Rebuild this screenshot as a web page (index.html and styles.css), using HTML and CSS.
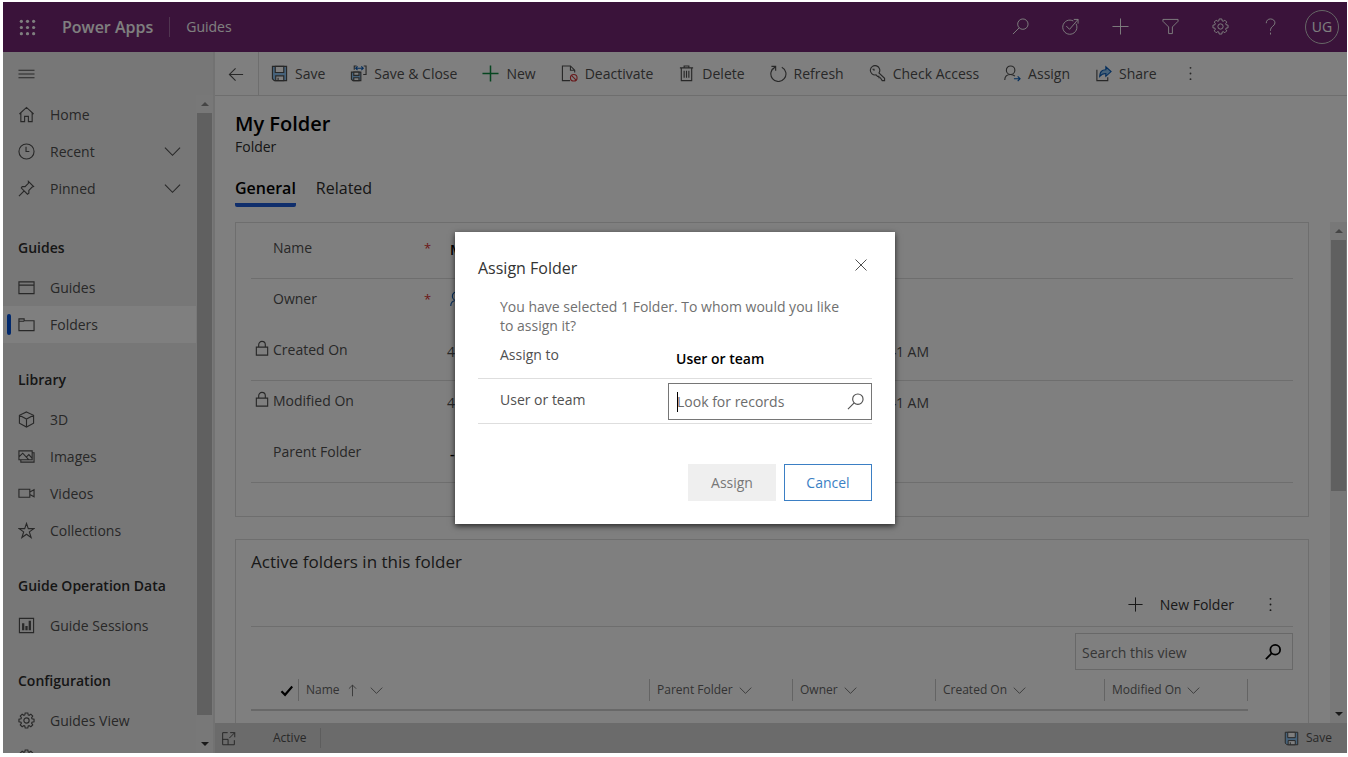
FILE: index.html
```html
<!DOCTYPE html>
<html lang="en">
<head>
<meta charset="utf-8">
<title>My Folder - Guides - Power Apps</title>
<link rel="stylesheet" href="styles.css">
</head>
<body>
<svg class="defs" aria-hidden="true">
  <symbol id="i-search" viewBox="0 0 18 18"><circle cx="11.5" cy="6.5" r="5.5"/><path d="M7.6 10.4L1 17"/></symbol>
  <symbol id="i-plus" viewBox="0 0 18 18"><path d="M9 .5v17M.5 9h17"/></symbol>
  <symbol id="i-gear" viewBox="0 0 18 18"><circle cx="9" cy="9" r="2.8"/><path d="M7.6 1h2.8l.4 2.1 1 .4 1.8-1.2 2 2-1.2 1.8.4 1 2.2.5v2.8l-2.2.4-.4 1 1.2 1.8-2 2-1.8-1.2-1 .4-.4 2.2H7.6l-.4-2.2-1-.4-1.8 1.2-2-2 1.2-1.8-.4-1L1 10.400V7.600l2.200-.5.4-1-1.200-1.800 2-2 1.800 1.200 1-.4z"/></symbol>
  <symbol id="i-down" viewBox="0 0 18 18"><path d="M1 5l8 8 8-8"/></symbol>
  <symbol id="i-dots" viewBox="0 0 18 18"><g class="dots"><circle cx="9" cy="3" r="1"/><circle cx="9" cy="9" r="1"/><circle cx="9" cy="15" r="1"/></g></symbol>
  <symbol id="i-disk" viewBox="0 0 18 18"><path class="blue" d="M1.500 1.500h15v15H3.500l-2-2z"/><path class="paper" d="M4.500 1.500h9V8h-9zM5 11.500h8.500v5H5z"/><path d="M7.500 13.500v3"/></symbol>
  <symbol id="i-person" viewBox="0 0 18 18"><circle cx="7" cy="5.500" r="4.500"/><path d="M.8 16c0-4 2.700-6 6.200-6 2 0 3.500.6 4.600 1.800"/></symbol>
  <symbol id="i-lock" viewBox="0 0 14 18"><path d="M1 7.500h12v8.500H1zM3.500 7.500V5a3.500 3.500 0 0 1 7 0v2.500"/></symbol>
</svg>

<div class="app">
  <header class="topbar">
    <button class="icon-btn" aria-label="App launcher"><svg class="waffle" viewBox="0 0 18 18"><g><circle cx="2.500" cy="2.500" r="1.700"/><circle cx="9" cy="2.500" r="1.700"/><circle cx="15.500" cy="2.500" r="1.700"/><circle cx="2.500" cy="9" r="1.700"/><circle cx="9" cy="9" r="1.700"/><circle cx="15.500" cy="9" r="1.700"/><circle cx="2.500" cy="15.500" r="1.700"/><circle cx="9" cy="15.500" r="1.700"/><circle cx="15.500" cy="15.500" r="1.700"/></g></svg></button>
    <a class="brand" href="#">Power Apps</a>
    <a class="area" href="#">Guides</a>
    <nav class="tools">
      <button class="icon-btn" aria-label="Search"><svg><use href="#i-search"/></svg></button>
      <button class="icon-btn" aria-label="Task flow"><svg viewBox="0 0 18 18"><path d="M14.800 6A7.500 7.500 0 1 1 12 3.200M4.500 8.500l3.500 3.500L17 1.500M12.500 1.500H17V6"/></svg></button>
      <button class="icon-btn" aria-label="Add"><svg><use href="#i-plus"/></svg></button>
      <button class="icon-btn" aria-label="Filter"><svg viewBox="0 0 18 18"><path d="M1 1.500h16v2l-6 6v7H7v-7l-6-6z"/></svg></button>
      <button class="icon-btn" aria-label="Settings"><svg><use href="#i-gear"/></svg></button>
      <button class="icon-btn" aria-label="Help"><svg viewBox="0 0 18 18"><path d="M4.500 5.500C4.500 2.800 6.300 1 9 1s4.700 1.800 4.700 4.200C13.700 8.500 9 9 9 12.500v1M9 15.500v2"/></svg></button>
      <button class="avatar">UG</button>
    </nav>
  </header>

  <div class="body">
    <aside class="sidebar">
      <button class="menu-btn" aria-label="Menu"><svg viewBox="0 0 18 18"><path d="M.5 5.500h17M.5 9.500h17M.5 13.500h17"/></svg></button>
      <div class="side-scroll">
        <nav class="side-list">
          <div class="side-group first">
            <a href="#"><svg viewBox="0 0 18 18"><path d="M1.500 8.500L9 1.500l7.500 7M3 7.500v9h4V11h4v5.500h4v-9"/></svg>Home</a>
            <a href="#"><svg viewBox="0 0 18 18"><circle cx="9" cy="9" r="8"/><path d="M8.500 4v5H12"/></svg>Recent<svg class="chev"><use href="#i-down"/></svg></a>
            <a href="#"><svg viewBox="0 0 18 18"><path d="M11 1.500l5.500 5.500-1.500.5-3.500 3.500v3l-1.500 1L3.500 8.500l1-1.500h3L11 3.500zM6.500 11.500L1 17"/></svg>Pinned<svg class="chev"><use href="#i-down"/></svg></a>
          </div>
          <div class="side-group">
            <h2>Guides</h2>
            <a href="#"><svg viewBox="0 0 18 18"><path d="M1 3h16v12.500H1zM1 6.500h16"/></svg>Guides</a>
            <a href="#" class="current"><svg viewBox="0 0 18 18"><path d="M1 3h5.500v2H17v10.500H1zM1 5.500h5.500"/></svg>Folders</a>
          </div>
          <div class="side-group">
            <h2>Library</h2>
            <a href="#"><svg viewBox="0 0 18 18"><path d="M9 1l7.500 3.500v8.500L9 17l-7.500-4V4.500zM1.500 4.500L9 8.500l7.500-4M9 8.500V17"/></svg>3D</a>
            <a href="#"><svg viewBox="0 0 18 18"><path d="M1 3h14v9.500H1zM15 5h2v10H3v-2.500M1 9.500l4-4 6.500 7M9 9.500L11.500 7l3.500 4"/></svg>Images</a>
            <a href="#"><svg viewBox="0 0 18 18"><path d="M1 4.500h11.500v8.500H1zM12.500 7.500L17 5v7.500L12.500 10"/></svg>Videos</a>
            <a href="#"><svg viewBox="0 0 18 18"><path d="M9 1.500l1.900 5.500h5.900l-4.800 3.500 1.900 6L9 13l-4.900 3.500 1.900-6L1.200 7h5.900z"/></svg>Collections</a>
          </div>
          <div class="side-group">
            <h2>Guide Operation Data</h2>
            <a href="#"><svg viewBox="0 0 18 18"><path d="M1.500 1.500h15v15h-15z"/><path class="bars" d="M5.500 6.500V14M9 9.500V14M12.500 4v10"/></svg>Guide Sessions</a>
          </div>
          <div class="side-group">
            <h2>Configuration</h2>
            <a href="#"><svg><use href="#i-gear"/></svg>Guides View</a>
            <a href="#" aria-label="More settings"><svg><use href="#i-gear"/></svg></a>
          </div>
        </nav>
        <div class="scrollbar side-bar" aria-hidden="true"><i class="up"></i><b></b><i class="down"></i></div>
      </div>
    </aside>

    <main class="main">
      <div class="commands">
        <button class="back" aria-label="Back"><svg viewBox="0 0 18 18"><path d="M16 10H1.500M8 3.500L1.500 10 8 16.500"/></svg></button>
        <div class="command-list">
          <button><svg><use href="#i-disk"/></svg>Save</button>
          <button><svg viewBox="0 0 18 18"><path class="blue" d="M1.500 7.500h10v9H3l-1.500-1.500z"/><path class="paper" d="M4 7.500h5.500V11H4zM4 13.500h5.500v3H4z"/><path d="M4.500 5V1H7M14.500 1H17v9h-3"/><path class="ink-blue" d="M6 3.500h8M8 1.500l-2 2 2 2M12 1.500l2 2-2 2"/></svg>Save &amp; Close</button>
          <button><svg class="green"><use href="#i-plus"/></svg>New</button>
          <button><svg viewBox="0 0 18 18"><path d="M9.500 16.500h-8V1h8.500l4.500 4.500V8M10 1v4.500h4.500"/><g class="red"><circle cx="13.500" cy="13.500" r="3.500"/><path d="M11 11l5 5"/></g></svg>Deactivate</button>
          <button><svg viewBox="0 0 18 18"><path d="M3.500 3.500v13h11v-13M2 3h14M6.500 3V1h5v2M6.500 6v7.500M9 6v7.500M11.500 6v7.500"/></svg>Delete</button>
          <button><svg viewBox="0 0 18 18"><path d="M12.500 2.300A8 8 0 1 1 5.500 2.200M1.500 1.500h4.500V6M6 1.500L3 4.500"/></svg>Refresh</button>
          <button><svg viewBox="0 0 18 18"><path d="M10.500 8.500a5 5 0 1 0-3 2l1.500 1.500H10.500v1.500H12l2 3h2.500V14zM3.700 4.500h1.600v1.600"/></svg>Check Access</button>
          <button><svg viewBox="0 0 18 18"><use href="#i-person" width="18" height="18"/><path class="ink-blue" d="M10.500 14.500H17M14.500 12l2.500 2.500-2.500 2.500"/></svg>Assign</button>
          <button><svg viewBox="0 0 18 18"><path d="M2 5v11.500h11.500V13"/><path class="blue ink-blue" d="M5 12c0-5 2.500-7 6.500-7V2L17 7l-5.500 5V9C8.500 9 6.500 10 5 12z"/></svg>Share</button>
          <button aria-label="More commands"><svg><use href="#i-dots"/></svg></button>
        </div>
      </div>

      <div class="record-head">
        <h1>My Folder</h1>
        <p>Folder</p>
        <div class="tabs" role="tablist">
          <button role="tab" aria-selected="true">General</button>
          <button role="tab" aria-selected="false">Related</button>
        </div>
      </div>

      <div class="form-scroll">
        <div class="form">
          <section class="card fields">
            <div class="field line"><span></span><span>Name</span><em>*</em><div class="value strong">My Folder</div></div>
            <div class="field"><span></span><span>Owner</span><em>*</em><div class="value"><svg class="owner"><use href="#i-person"/></svg></div></div>
            <div class="field line"><svg class="lock"><use href="#i-lock"/></svg><span>Created On</span><em></em><div class="value date"><span>4/27/2021</span><span>11:41 AM</span></div></div>
            <div class="field"><svg class="lock"><use href="#i-lock"/></svg><span>Modified On</span><em></em><div class="value date"><span>4/27/2021</span><span>11:41 AM</span></div></div>
            <div class="field line"><span></span><span>Parent Folder</span><em></em><div class="value strong">---</div></div>
          </section>

          <section class="card grid-card">
            <h2>Active folders in this folder</h2>
            <div class="grid-tools">
              <button class="new-folder"><svg><use href="#i-plus"/></svg>New Folder</button>
              <button class="icon-btn" aria-label="More commands"><svg><use href="#i-dots"/></svg></button>
            </div>
            <div class="search-row">
              <label class="search-box"><input type="text" placeholder="Search this view" aria-label="Search this view"><svg><use href="#i-search"/></svg></label>
            </div>
            <table class="grid">
              <colgroup><col class="c-check"><col><col class="c-std"><col class="c-std"><col class="c-wide"><col class="c-std"></colgroup>
              <thead><tr>
                <th class="check"><div><svg viewBox="0 0 18 18" aria-label="Select all"><path d="M2 10l5 5L17 3.500"/></svg></div></th>
                <th><div>Name <svg class="sort" viewBox="0 0 18 18"><path d="M9 17V1.500M4 6.500l5-5 5 5"/></svg><svg><use href="#i-down"/></svg></div></th>
                <th><div>Parent Folder <svg><use href="#i-down"/></svg></div></th>
                <th><div>Owner <svg><use href="#i-down"/></svg></div></th>
                <th><div>Created On <svg><use href="#i-down"/></svg></div></th>
                <th><div>Modified On <svg><use href="#i-down"/></svg></div></th>
              </tr></thead>
            </table>
          </section>
        </div>
        <div class="scrollbar form-bar" aria-hidden="true"><i class="up"></i><b></b><i class="down"></i></div>
      </div>

      <footer class="status">
        <button aria-label="Open in new window"><svg viewBox="0 0 18 18"><path d="M8 2H2v14.500h14V11M2 10h6.500v6.500M11 2h5.500v5.500M16.500 2L10 8.500"/></svg></button>
        <span class="state">Active</span>
        <button class="save"><svg><use href="#i-disk"/></svg>Save</button>
      </footer>
    </main>
  </div>

  <div class="overlay">
    <div class="dialog" role="dialog" aria-modal="true" aria-labelledby="dialog-title">
      <div class="dialog-head">
        <h2 id="dialog-title">Assign Folder</h2>
        <button aria-label="Close"><svg viewBox="0 0 12 12"><path d="M.5.500l11 11M11.500.500l-11 11"/></svg></button>
      </div>
      <p>You have selected 1 Folder. To whom would you like to assign it?</p>
      <div class="dialog-row"><span>Assign to</span><strong>User or team</strong></div>
      <div class="dialog-row lookup-row">
        <label for="lookup">User or team</label>
        <div class="lookup"><i class="caret"></i><input id="lookup" type="text" placeholder="Look for records"><svg><use href="#i-search"/></svg></div>
      </div>
      <div class="actions">
        <button disabled>Assign</button>
        <button class="cancel">Cancel</button>
      </div>
    </div>
  </div>
</div>
</body>
</html>
```

FILE: styles.css
```css
* { box-sizing: border-box; }

body {
  margin: 0;
  background: #fff;
  color: #505050;
  font: 14px/20px "Open Sans", "Noto Sans", sans-serif;
}

h1, h2, p { margin: 0; font-weight: 400; }
a { color: inherit; text-decoration: none; }
button, input { font: inherit; color: inherit; }
button { padding: 0; border: 0; background: none; white-space: nowrap; }
svg { width: 17px; height: 17px; flex: none; fill: none; stroke: currentColor; stroke-width: 1.2; }
.defs { position: absolute; width: 0; height: 0; }
.dots { fill: currentColor; stroke: none; }

.app {
  position: relative;
  display: flex;
  flex-direction: column;
  height: calc(100vh - 6px);
  margin: 2px 1px 4px 3px;
  overflow: hidden;
}

/* Top bar */
.topbar { display: flex; align-items: center; height: 50px; flex: none; padding: 0 8px 0 16px; background: #742774; color: #fff; }
.icon-btn { display: flex; }
.waffle { fill: currentColor; stroke: none; }
.brand { margin-left: 26px; padding-right: 16px; border-right: 1px solid #a06ba0; font-size: 16px; font-weight: 600; }
.area { margin-left: 16px; }
.tools { display: flex; align-items: center; gap: 33px; margin-left: auto; }
.tools svg { stroke-width: 1; }
.tools .icon-btn { padding-bottom: 2px; }
.avatar { width: 34px; height: 34px; margin-left: -7px; border: 1px solid #ccc; border-radius: 50%; }

.body { display: flex; flex: 1; min-height: 0; }

/* Site map */
.sidebar { display: flex; flex-direction: column; width: 212px; flex: none; border-right: 2px solid #e4e4e4; background: #efefef; }
.menu-btn { display: flex; align-items: center; height: 43px; flex: none; padding-left: 15px; }
.side-scroll { display: flex; flex: 1; min-height: 0; }
.side-list { flex: 1; padding-top: 1px; overflow: hidden; }
.side-group { padding-bottom: 16px; }
.side-group.first { padding-bottom: 20px; }
.side-group h2 { padding-left: 15px; font-size: 14px; line-height: 42px; font-weight: 600; color: #2c2c2c; }
.side-group a { position: relative; display: flex; align-items: center; gap: 15px; height: 37px; padding: 0 15px; }
.side-group .chev { margin-left: auto; }
.side-group .current { background: #fff; }
.current::before { content: ""; position: absolute; left: 4px; top: 8px; width: 4px; height: 21px; border-radius: 2px; background: #0050d8; }
.bars { stroke-width: 2.4; }

/* Scroll bars */
.scrollbar { display: flex; flex-direction: column; align-items: center; width: 17px; flex: none; background: #f1f1f1; }
.scrollbar b { width: 15px; background: #c1c1c1; }
.scrollbar i { width: 17px; height: 18px; flex: none; display: flex; align-items: center; justify-content: center; }
.scrollbar i::before { content: ""; border: 4px solid transparent; }
.scrollbar .up::before { border-bottom-color: #8a8a8a; border-top: 0; }
.scrollbar .down::before { border-top-color: #333; border-bottom: 0; }
.side-bar b { flex: 1; }
.side-bar .down { margin-top: 20px; }
.form-bar b { flex: 0 1 50%; }
.form-bar .down { margin-top: auto; }

/* Commands */
.main { display: flex; flex-direction: column; flex: 1; min-width: 0; background: #fff; }
.commands { display: flex; height: 44px; flex: none; border-bottom: 1px solid #dcdcdc; }
.back { display: flex; align-items: center; justify-content: center; width: 44px; border-right: 1px solid #dcdcdc; }
.command-list { display: flex; align-items: center; gap: 25px; padding-left: 12px; }
.command-list button { display: flex; align-items: center; gap: 7px; }
.blue { fill: #8cc4f4; }
.paper { fill: #fff; }
.ink-blue { stroke: #0a5cb8; }
.green { color: #0d8a40; stroke-width: 1.6; }
.red { stroke: #d13438; }

.record-head { flex: none; padding: 16px 20px 15px; color: #2c2c2c; }
.record-head h1 { font-size: 20px; line-height: 24px; font-weight: 600; color: #000; }
.record-head p { padding-top: 1px; }
.tabs { display: flex; gap: 20px; margin-top: 20px; }
.tabs button { padding-bottom: 4px; border-bottom: 4px solid transparent; font-size: 16px; line-height: 22px; }
.tabs [aria-selected="true"] { border-color: #1f5cd8; border-radius: 2px; font-weight: 600; color: #000; }

/* Form */
.form-scroll { display: flex; flex: 1; min-height: 0; }
.form { flex: 1; min-width: 0; padding: 0 21px 0 20px; overflow: hidden; }
.card { padding: 0 15px; border: 1px solid #dcdcdc; }
.fields { padding-top: 5px; padding-bottom: 33px; }
.field { display: grid; grid-template-columns: 22px 150px 24px 482px; height: 51px; padding-top: 10px; }
.line { border-bottom: 1px solid #dcdcdc; }
.field em { padding-left: 1px; font-size: 13px; font-style: normal; color: #d83030; }
.lock { width: 14px; margin-left: 4px; }
.value { padding-top: 2px; }
.date { display: flex; justify-content: space-between; }
.strong { padding-left: 3px; font-weight: 600; color: #000; }
.owner { margin-left: 3px; color: #0a5cb8; }

.grid-card { height: 300px; margin-top: 22px; color: #333; }
.grid-card h2 { padding-top: 10px; font-size: 17px; line-height: 24px; }
.grid-tools { display: flex; align-items: center; justify-content: flex-end; gap: 28px; height: 44px; margin-top: 9px; padding-right: 14px; border-bottom: 1px solid #dcdcdc; }
.new-folder { display: flex; align-items: center; gap: 17px; }
.new-folder svg { width: 15px; height: 15px; }
.search-row { display: flex; justify-content: flex-end; padding: 6px 0 1px; }
.search-box { display: flex; align-items: center; width: 218px; height: 37px; padding: 0 11px 0 6px; border: 1px solid #d0d0d0; }
.search-box input { flex: 1; min-width: 0; padding: 2px 0 0; border: 0; background: none; }
.search-box svg { width: 16px; height: 16px; stroke-width: 2; color: #000; }
input::placeholder { color: #6c6c6c; opacity: 1; }
input { outline: 0; }

.grid { width: calc(100% - 45px); table-layout: fixed; border-collapse: collapse; font-size: 12px; color: #666; }
.c-check { width: 48px; }
.c-std { width: 143px; }
.c-wide { width: 169px; }
.grid th { padding: 8px 0; border-bottom: 2px solid #d0d0d0; font-weight: 400; }
.grid th > div { display: flex; align-items: center; gap: 6px; height: 22px; padding-left: 7px; border-right: 1px solid #c8c8c8; }
.grid th svg { width: 13px; height: 13px; }
.grid .sort { margin-right: 5px; }
.grid .check > div { justify-content: flex-end; padding-right: 5px; }
.grid .check svg { color: #000; stroke-width: 3; }

.status { display: flex; align-items: center; height: 30px; flex: none; padding: 0 15px 0 6px; background: #d6d6d6; font-size: 12px; }
.status svg { width: 15px; height: 15px; }
.status button { display: flex; align-items: center; gap: 7px; }
.state { margin-left: 37px; padding-right: 14px; border-right: 1px solid #bbb; }
.status .save { margin-left: auto; }

/* Assign dialog */
.overlay { position: absolute; inset: 0; display: flex; align-items: center; justify-content: center; background: rgba(0, 0, 0, .5); }
.dialog { width: 440px; padding: 23px; background: #fff; box-shadow: 0 2px 6px rgba(0, 0, 0, .7); }
.dialog-head { display: flex; align-items: flex-start; justify-content: space-between; padding-right: 5px; }
.dialog-head h2 { font-size: 16px; line-height: 26px; color: #333; }
.dialog-head svg { width: 12px; height: 12px; stroke-width: 1; }
.dialog-head button { display: flex; padding-top: 4px; }
.dialog p { margin-top: 16px; padding: 0 22px; line-height: 19px; color: #707070; }
.dialog-row { display: grid; grid-template-columns: 1fr 204px; padding-left: 22px; border-bottom: 1px solid #dedede; }
.dialog-row span { padding-top: 10px; }
.dialog-row strong { padding: 14px 8px 9px; font-weight: 600; color: #000; }
.dialog-row label { padding-top: 7px; }
.lookup-row { padding-top: 4px; padding-bottom: 3px; }
.lookup { position: relative; display: flex; align-items: center; height: 37px; padding: 0 7px 0 8px; border: 1px solid #767676; }
.lookup input { flex: 1; min-width: 0; padding: 2px 0 0; border: 0; }
.caret { position: absolute; left: 8px; top: 8px; width: 1px; height: 20px; background: #000; }
.actions { display: flex; justify-content: flex-end; gap: 8px; margin-top: 40px; }
.actions button { width: 88px; height: 37px; padding-top: 2px; background: #efefef; color: #777; }
.actions .cancel { border: 1px solid #3b7fc4; background: #fff; color: #3b7fc4; }
```
